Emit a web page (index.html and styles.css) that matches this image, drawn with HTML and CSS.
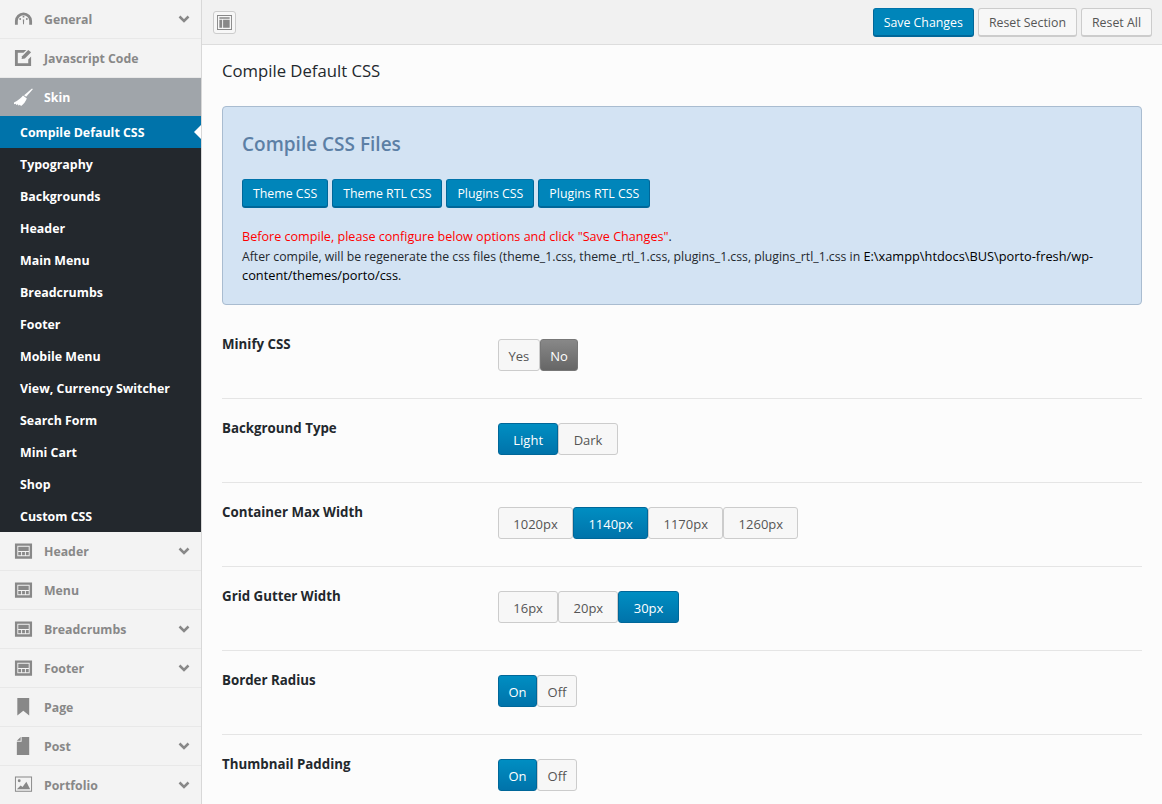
FILE: index.html
```html
<!DOCTYPE html>
<html lang="en">

<head>
  <meta charset="UTF-8" />
  <title>Theme Options</title>
  <link rel="stylesheet" href="styles.css">
</head>

<body>
  <aside class="sidebar">
    <a class="nav-item">
      <svg class="nav-icon" viewBox="0 0 20 20"><path d="M1 15.500v-4a9 9 0 0 1 18 0v4h-3v-4a6 6 0 0 0-12 0v4z"/><circle cx="10" cy="7" r="1"/><circle cx="6.500" cy="9.500" r="1"/><circle cx="13.500" cy="9.500" r="1"/><path d="M9.300 10h1.400l-.2 5h-1z"/></svg>
      <span>General</span><svg class="chev" viewBox="0 0 12 8"><path d="M1.500 1.500 6 6l4.500-4.500"/></svg>
    </a>
    <a class="nav-item">
      <svg class="nav-icon" viewBox="0 0 20 20"><path d="M1 1h12l-3 3H4v11h11v-4l3-3v10H1z"/><path d="M8 10.500l.5-3L15 1l3 2.500-6.500 6.500z"/></svg>
      <span>Javascript Code</span>
    </a>
    <a class="nav-item nav-item--current">
      <svg class="nav-icon" viewBox="0 0 20 20"><path d="M19 .5l.8.8-7 8-2.200-1.600z"/><path d="M9.500 8l4 3c-1 3-3.500 6-6 8L6 17.500l-1 1.200-1-1.500-1.500.8-.8-1.500-1.700.5-.5-1.500C4 13.500 7 11 9.500 8z"/></svg>
      <span>Skin</span>
    </a>
    <ul class="submenu">
      <li class="submenu-item submenu-item--active">Compile Default CSS</li>
      <li class="submenu-item">Typography</li>
      <li class="submenu-item">Backgrounds</li>
      <li class="submenu-item">Header</li>
      <li class="submenu-item">Main Menu</li>
      <li class="submenu-item">Breadcrumbs</li>
      <li class="submenu-item">Footer</li>
      <li class="submenu-item">Mobile Menu</li>
      <li class="submenu-item">View, Currency Switcher</li>
      <li class="submenu-item">Search Form</li>
      <li class="submenu-item">Mini Cart</li>
      <li class="submenu-item">Shop</li>
      <li class="submenu-item">Custom CSS</li>
    </ul>
    <a class="nav-item">
      <svg class="nav-icon" viewBox="0 0 20 20"><path fill-rule="evenodd" d="M1 1.500h18v16H1zM3.500 4v11h13V4z"/><path d="M4.500 5h11v4.500h-11zM4.500 10.500h3V14h-3zM8.500 10.500h3V14h-3zM12.500 10.500h3V14h-3z"/></svg>
      <span>Header</span><svg class="chev" viewBox="0 0 12 8"><path d="M1.500 1.500 6 6l4.500-4.500"/></svg>
    </a>
    <a class="nav-item">
      <svg class="nav-icon" viewBox="0 0 20 20"><path fill-rule="evenodd" d="M1 1.500h18v16H1zM3.500 4v11h13V4z"/><path d="M4.500 5h11v4.500h-11zM4.500 10.500h3V14h-3zM8.500 10.500h3V14h-3zM12.500 10.500h3V14h-3z"/></svg>
      <span>Menu</span>
    </a>
    <a class="nav-item">
      <svg class="nav-icon" viewBox="0 0 20 20"><path fill-rule="evenodd" d="M1 1.500h18v16H1zM3.500 4v11h13V4z"/><path d="M4.500 5h11v4.500h-11zM4.500 10.500h3V14h-3zM8.500 10.500h3V14h-3zM12.500 10.500h3V14h-3z"/></svg>
      <span>Breadcrumbs</span><svg class="chev" viewBox="0 0 12 8"><path d="M1.500 1.500 6 6l4.500-4.500"/></svg>
    </a>
    <a class="nav-item">
      <svg class="nav-icon" viewBox="0 0 20 20"><path fill-rule="evenodd" d="M1 1.500h18v16H1zM3.500 4v11h13V4z"/><path d="M4.500 5h11v4.500h-11zM4.500 10.500h3V14h-3zM8.500 10.500h3V14h-3zM12.500 10.500h3V14h-3z"/></svg>
      <span>Footer</span><svg class="chev" viewBox="0 0 12 8"><path d="M1.500 1.500 6 6l4.500-4.500"/></svg>
    </a>
    <a class="nav-item">
      <svg class="nav-icon" viewBox="0 0 20 20"><path d="M3.500 0H16v18.500l-6.200-5-6.300 5z"/></svg>
      <span>Page</span>
    </a>
    <a class="nav-item">
      <svg class="nav-icon" viewBox="0 0 20 20"><path d="M8 0h8v19H3V5h5zM3 4l4-4v4z"/></svg>
      <span>Post</span><svg class="chev" viewBox="0 0 12 8"><path d="M1.500 1.500 6 6l4.500-4.500"/></svg>
    </a>
    <a class="nav-item">
      <svg class="nav-icon" viewBox="0 0 20 20"><path fill-rule="evenodd" d="M1 .5h18v16H1zM2 1.500v14h16v-14z"/><path d="M3 14l4-4 2 1.500L13 6l4 8z"/><circle cx="5.500" cy="5" r="1.500"/></svg>
      <span>Portfolio</span><svg class="chev" viewBox="0 0 12 8"><path d="M1.500 1.500 6 6l4.500-4.500"/></svg>
    </a>
  </aside>

  <main class="main">
    <header class="topbar">
      <button class="layout-btn">
        <svg viewBox="0 0 16 16" width="15" height="15"><path fill-rule="evenodd" d="M0 0h16v16H0zM1 1v14h14V1z"/><path d="M2.500 2.500h11v1.500h-11zM2.500 5h3v8.500h-3zM6.500 5h7v8.500h-7z"/></svg>
      </button>
      <div class="topbar-actions">
        <button class="btn btn--primary">Save Changes</button>
        <button class="btn">Reset Section</button>
        <button class="btn">Reset All</button>
      </div>
    </header>

    <section class="panel">
      <h2 class="panel-title">Compile Default CSS</h2>

      <div class="notice">
        <h3 class="notice-title">Compile CSS Files</h3>
        <div class="notice-actions">
          <button class="btn btn--primary">Theme CSS</button>
          <button class="btn btn--primary">Theme RTL CSS</button>
          <button class="btn btn--primary">Plugins CSS</button>
          <button class="btn btn--primary">Plugins RTL CSS</button>
        </div>
        <p class="notice-text">
          <span class="red">Before compile, please configure below options and click "Save Changes"</span>.<br>
          After compile, will be regenerate the css files (theme_1.css, theme_rtl_1.css, plugins_1.css, plugins_rtl_1.css in <span class="path">E:\xampp\htdocs\BUS\porto-fresh/wp-content/themes/porto/css</span>.
        </p>
      </div>

      <div class="option option--first">
        <div class="option-label">Minify CSS</div>
        <div class="switch switch--tight">
          <span class="switch-btn">Yes</span>
          <span class="switch-btn switch-btn--off">No</span>
        </div>
      </div>
      <div class="option">
        <div class="option-label">Background Type</div>
        <div class="switch">
          <span class="switch-btn switch-btn--on">Light</span>
          <span class="switch-btn">Dark</span>
        </div>
      </div>
      <div class="option">
        <div class="option-label">Container Max Width</div>
        <div class="switch">
          <span class="switch-btn">1020px</span>
          <span class="switch-btn switch-btn--on">1140px</span>
          <span class="switch-btn">1170px</span>
          <span class="switch-btn">1260px</span>
        </div>
      </div>
      <div class="option">
        <div class="option-label">Grid Gutter Width</div>
        <div class="switch">
          <span class="switch-btn">16px</span>
          <span class="switch-btn">20px</span>
          <span class="switch-btn switch-btn--on">30px</span>
        </div>
      </div>
      <div class="option">
        <div class="option-label">Border Radius</div>
        <div class="switch switch--tight">
          <span class="switch-btn switch-btn--on">On</span>
          <span class="switch-btn">Off</span>
        </div>
      </div>
      <div class="option">
        <div class="option-label">Thumbnail Padding</div>
        <div class="switch switch--tight">
          <span class="switch-btn switch-btn--on">On</span>
          <span class="switch-btn">Off</span>
        </div>
      </div>
    </section>
  </main>
</body>

</html>
```

FILE: styles.css
```css
* {
  box-sizing: border-box;
  margin: 0;
  padding: 0;
}

html,
body {
  height: 100%;
  overflow: hidden;
}

body {
  display: flex;
  background: #fcfcfc;
  color: #23282d;
  font-family: 'Open Sans', sans-serif;
  font-size: 13px;
}

.sidebar {
  width: 202px;
  flex-shrink: 0;
  background: #f3f3f3;
  border-right: 1px solid #d8d8d8;
}

.nav-item {
  display: flex;
  align-items: center;
  height: 39px;
  padding-left: 14px;
  padding-right: 11px;
  border-bottom: 1px solid #e8e8e8;
  color: #888;
  font-size: 12.3px;
  font-weight: 700;
}

.nav-item span {
  margin-left: 11px;
  flex: 1;
}

.nav-icon {
  width: 19px;
  height: 19px;
  fill: #888;
  flex-shrink: 0;
}

.chev {
  width: 12px;
  height: 8px;
  fill: none;
  stroke: #888;
  stroke-width: 2.5;
}

.nav-item--current {
  height: 38px;
  background: #a0a5aa;
  border-bottom: 0;
  color: #fff;
}

.nav-item--current .nav-icon {
  fill: #fff;
}

.submenu {
  list-style: none;
  background: #23282d;
}

.submenu-item {
  position: relative;
  height: 32px;
  line-height: 33px;
  padding-left: 20px;
  color: #fff;
  font-size: 12.4px;
  font-weight: 700;
}

.submenu-item--active {
  background: #0073aa;
}

.submenu-item--active::after {
  content: "";
  position: absolute;
  right: 0;
  top: 9px;
  border: 7px solid transparent;
  border-left: 0;
  border-right-color: #fff;
}

.main {
  flex: 1;
  min-width: 0;
}

.topbar {
  display: flex;
  justify-content: space-between;
  height: 45px;
  padding: 8px 10px 0 11px;
  background: #f1f1f1;
  border-bottom: 1px solid #ddd;
}

.layout-btn {
  display: flex;
  align-items: center;
  justify-content: center;
  width: 23px;
  height: 23px;
  margin-top: 3px;
  background: #f7f7f7;
  border: 1px solid #ccc;
  border-radius: 3px;
  fill: #888;
}

.topbar-actions {
  display: flex;
  gap: 4px;
}

.btn {
  height: 29px;
  padding: 0 10px;
  background: #f7f7f7;
  border: 1px solid #ccc;
  border-bottom-width: 2px;
  border-radius: 3px;
  color: #555;
  font-family: inherit;
  font-size: 12.35px;
}

.btn--primary {
  background: #0085ba;
  border-color: #0073aa #006799 #006799;
  color: #fff;
}

.panel {
  padding: 0 20px;
}

.panel-title {
  margin-top: 14px;
  font-size: 16.7px;
  font-weight: 400;
  line-height: 23px;
}

.notice {
  height: 199px;
  margin-top: 24px;
  padding: 25px 19px 0;
  background: #d3e3f3;
  border: 1px solid #a9bcd0;
  border-radius: 4px;
}

.notice-title {
  color: #5c7fa5;
  font-size: 19px;
  font-weight: 600;
  line-height: 24px;
}

.notice-actions {
  display: flex;
  gap: 4px;
  margin-top: 23px;
}

.notice-text {
  margin-top: 20px;
  color: #23282d;
  font-size: 12.25px;
  line-height: 18.6px;
}

.red {
  color: #f00;
  font-size: 12.6px;
}

.path {
  color: #000;
  font-size: 12.8px;
}

.option {
  display: flex;
  height: 84px;
  padding-top: 20px;
  border-bottom: 1px solid #e5e5e5;
}

.option--first {
  margin-top: 10px;
}

.option:last-child {
  border-bottom: 0;
}

.option-label {
  width: 276px;
  font-size: 13.3px;
  font-weight: 700;
  line-height: 18px;
}

.switch {
  display: flex;
  height: 32px;
  margin-top: 4px;
}

.switch-btn {
  display: flex;
  align-items: center;
  padding: 1px 14.3px 0;
  background: #f7f7f7;
  border: 1px solid #ccc;
  border-radius: 3px;
  color: #555;
  font-size: 13px;
}

.switch--tight .switch-btn {
  padding: 1px 9.5px 0;
}

.switch-btn--on {
  background: linear-gradient(to bottom, #008ec2, #0073aa);
  border-color: #006799;
  color: #fff;
}

.switch-btn--off {
  background: linear-gradient(to bottom, #888, #666);
  border-color: #777;
  color: #fff;
}
```
